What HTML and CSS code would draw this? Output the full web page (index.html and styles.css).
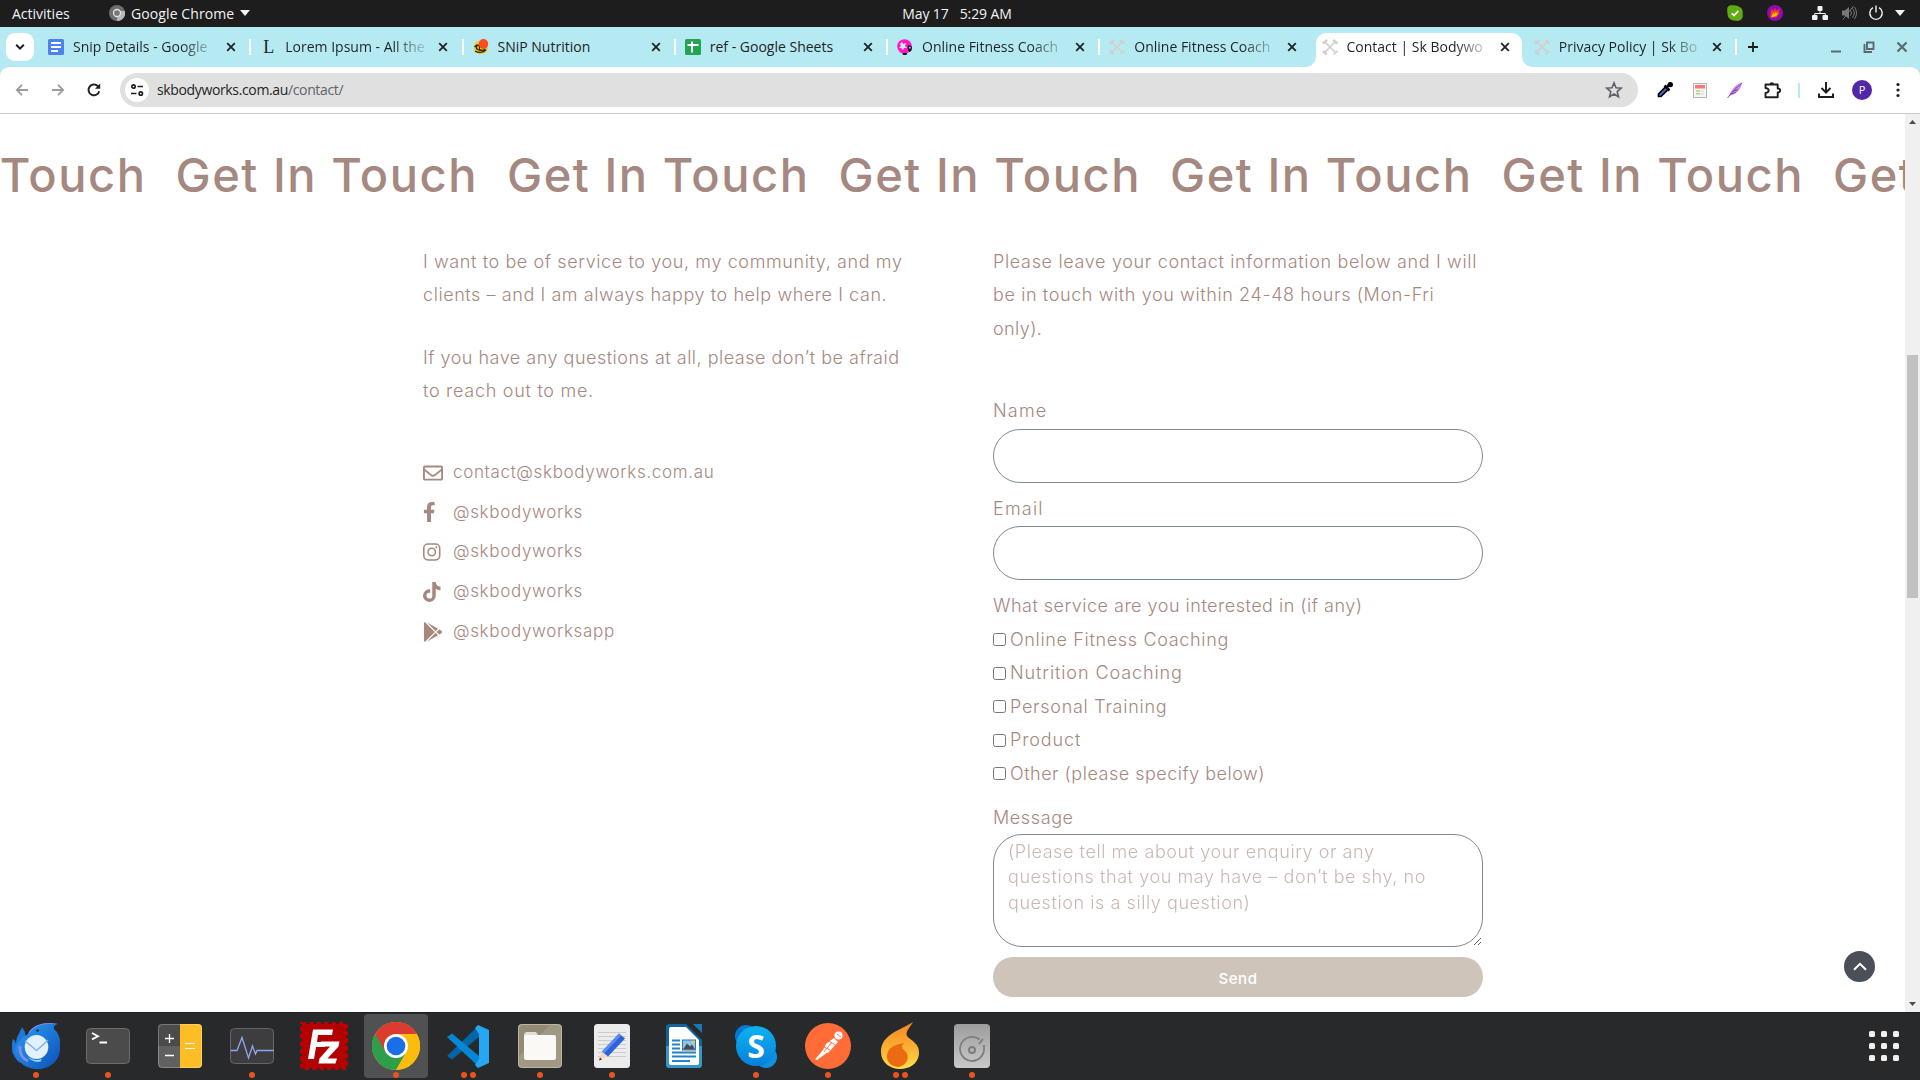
FILE: index.html
```html
<!DOCTYPE html>
<html lang="en">
<head>
<meta charset="utf-8">
<title>Contact | Sk Bodyworks</title>
<link rel="stylesheet" href="styles.css">
</head>
<body>
<svg class="defs" aria-hidden="true">
  <symbol id="close" viewBox="0 0 16 16"><path d="M4.200 4.200l7.600 7.600M11.800 4.200l-7.600 7.600" stroke="currentColor" stroke-width="1.800" fill="none"/></symbol>
  <symbol id="bones" viewBox="0 0 16 16"><g stroke="currentColor" fill="none" stroke-width="1.700"><path d="M3 3l10.500 10.500M13 3L2.500 13.500"/></g><g fill="currentColor"><circle cx="2" cy="3.600" r="1.700"/><circle cx="4" cy="1.800" r="1.600"/><circle cx="12.200" cy="1.800" r="1.600"/><circle cx="14.200" cy="3.600" r="1.600"/><circle cx="2" cy="13" r="1.500"/><circle cx="3.600" cy="14.500" r="1.500"/><circle cx="12.600" cy="14.600" r="1.200"/><circle cx="14.500" cy="12.700" r="1.200"/></g></symbol>
</svg>

<header class="topbar">
  <span class="menus">
    <span class="activities">Activities</span>
    <span class="appmenu">
      <svg width="16" height="16" viewBox="0 0 16 16"><circle cx="8" cy="8" r="8" fill="#6f6f6f"/><path d="M8 16a8 8 0 0 0 8-10H9z" fill="#b9b9b9"/><circle cx="8" cy="8" r="3.500" fill="#777" stroke="#e4e4e4" stroke-width="1.300"/></svg>
      <span class="appname">Google Chrome</span>
      <svg width="10" height="6" viewBox="0 0 10 6"><path d="M0 0h10L5 6z" fill="#f2f2f2"/></svg>
    </span>
  </span>
  <span class="clock"><span>May 17</span><span>5:29 AM</span></span>
  <span class="tray">
    <svg width="16" height="16" viewBox="0 0 16 16"><path d="M4 .3C8 .1 15 1 15.600 6c.3 2-.2 3 .2 5-.3 4-4 5.500-6.500 4.700C4 16 .8 13 .6 9.500.7 8 0 7 .2 4 .3 2 2 .4 4 .3z" fill="#5fab12"/><path d="M4.800 8.300l2.300 2.200 4.200-4.600" stroke="#fff" stroke-width="1.700" fill="none"/></svg>
    <svg class="t2" width="16" height="16" viewBox="0 0 16 16"><circle cx="8" cy="8" r="8" fill="#8f0bb0"/><path d="M3.500 12.500C3 9 4 6 5 3.500l1.200 3L8 2.800l.8 3.400 4-2.700-1.300 4 1.300.3-3.300 4.400z" fill="#ff3d1f"/><path d="M4 12.500l2.500-5 .8 1.800L9 6.500l.6 2 1.600-.8-2 3.300z" fill="#ffc400"/></svg>
    <svg class="t3" width="16" height="16" viewBox="0 0 16 16"><g fill="#f2f2f2"><rect x="5.500" y="1" width="5" height="5" rx="1"/><rect x="0" y="10" width="5.500" height="5" rx="1"/><rect x="10.500" y="10" width="5.500" height="5" rx="1"/></g><path d="M8 6v2.500M2.700 10.500v-2h10.600v2" stroke="#f2f2f2" fill="none"/></svg>
    <svg class="t4" width="16" height="16" viewBox="0 0 16 16"><path d="M1 5.500h3L8 2v12l-4-3.500H1z" fill="#777"/><path d="M9.500 5.500q2 2.500 0 5M11.500 3.500q3.500 4.500 0 9M13.500 2q4 6 0 12M2 14.500L12.500 1" stroke="#777" fill="none"/></svg>
    <svg class="t5" width="16" height="16" viewBox="0 0 16 16"><path d="M5 2.700a6.200 6.200 0 1 0 6 0M8 .5v7" stroke="#f2f2f2" stroke-width="1.400" fill="none"/></svg>
    <svg class="t6" width="10" height="6" viewBox="0 0 10 6"><path d="M0 0h10L5 6z" fill="#f2f2f2"/></svg>
  </span>
</header>

<nav class="tabstrip">
  <span class="tabsearch"><svg width="10" height="8" viewBox="0 0 10 8"><path d="M1.200 1.800L5 5.600l3.800-3.800" stroke="#1c1c1c" stroke-width="2" fill="none"/></svg></span>
  <div class="tab"><svg class="fav" viewBox="0 0 16 16"><rect width="16" height="16" rx="1.500" fill="#4c82ee"/><path d="M3 4h10M3 8h10M3 12h7" stroke="#fff" stroke-width="1.800"/></svg><span class="ttl fade">Snip Details - Google</span><svg class="x"><use href="#close"/></svg></div>
  <div class="tab"><span class="fav letter">L</span><span class="ttl fade">Lorem Ipsum - All the</span><svg class="x"><use href="#close"/></svg></div>
  <div class="tab"><svg class="fav" viewBox="0 0 16 16"><path d="M1 8C1 4 5 1 9 2l6 7c-1 5-5 6-8 6s-6-2-6-7z" fill="#f3ca16"/><path d="M1.500 8c2-3 6-2 5 1s3 3 6 1M2 12c3 2 8 2 11-1M4 6C2 10 5 12 9 11" stroke="#302800" stroke-width="1.300" fill="none"/><ellipse cx="10.500" cy="5" rx="4.700" ry="5" fill="#ff4b20"/></svg><span class="ttl">SNiP Nutrition</span><svg class="x"><use href="#close"/></svg></div>
  <div class="tab"><svg class="fav" viewBox="0 0 16 16"><rect width="16" height="16" rx="1.500" fill="#23a455"/><path d="M2.500 6h11M7 2.500v11" stroke="#fff" stroke-width="1.900"/></svg><span class="ttl">ref - Google Sheets</span><svg class="x"><use href="#close"/></svg></div>
  <div class="tab"><svg class="fav" viewBox="0 0 16 16"><circle cx="7.500" cy="7.500" r="7.300" fill="#ff18c4"/><path d="M3 5l2-2 1 2 3-1-1 3 2 2-3 0-1 2-2-2H2l2-2z" fill="#c9eef5"/><path d="M11 6.500q4-.5 4 2.500 0 3-2.500 4Q10 10 11 6.500zM5.500 14h4.500l-.5 2H6z" fill="#141414"/><circle cx="12.800" cy="8.800" r="1" fill="#9ce"/></svg><span class="ttl fade">Online Fitness Coach</span><svg class="x"><use href="#close"/></svg></div>
  <div class="tab"><svg class="fav bones"><use href="#bones"/></svg><span class="ttl fade">Online Fitness Coach</span><svg class="x"><use href="#close"/></svg></div>
  <div class="tab active"><svg class="fav bones"><use href="#bones"/></svg><span class="ttl fade">Contact | Sk Bodywo</span><svg class="x"><use href="#close"/></svg></div>
  <div class="tab"><svg class="fav bones"><use href="#bones"/></svg><span class="ttl fade">Privacy Policy | Sk Bo</span><svg class="x"><use href="#close"/></svg></div>
  <svg class="plus" width="12" height="12" viewBox="0 0 12 12"><path d="M6 1v10M1 6h10" stroke="#1c1c1c" stroke-width="1.800"/></svg>
  <span class="winctl">
    <svg width="12" height="12" viewBox="0 0 12 12"><path d="M1 10.500h10" stroke="#5b6a6d" stroke-width="2"/></svg>
    <svg width="12" height="12" viewBox="0 0 12 12"><path d="M4 1.500h6.500V8H4zM1.500 3v8H9" stroke="#5b6a6d" stroke-width="1.900" fill="none"/></svg>
    <svg width="12" height="12" viewBox="0 0 12 12"><path d="M1.500 1.500l9 9M10.500 1.500l-9 9" stroke="#5b6a6d" stroke-width="2.200"/></svg>
  </span>
</nav>

<div class="toolbar">
  <svg class="nav off" viewBox="0 0 16 16"><path d="M14 8H3M8 2.800L2.800 8 8 13.200" stroke="currentColor" stroke-width="1.800" fill="none"/></svg>
  <svg class="nav off" viewBox="0 0 16 16"><path d="M2 8h11M8 2.800L13.200 8 8 13.200" stroke="currentColor" stroke-width="1.800" fill="none"/></svg>
  <svg class="nav" viewBox="0 0 16 16"><path d="M13.200 9.200A5.400 5.400 0 1 1 11.700 4l1.600 1.500" stroke="currentColor" stroke-width="1.900" fill="none"/><path d="M14.200 1.500v5.300H9z" fill="currentColor"/></svg>
  <div class="omnibox">
    <span class="siteinfo"><svg width="14" height="14" viewBox="0 0 14 14"><g stroke="#1f1f1f" stroke-width="1.700" fill="none"><circle cx="3.500" cy="3.500" r="1.700"/><path d="M7.500 3.500H13M1 10.500h5.500"/><circle cx="10.800" cy="10.500" r="1.700"/></g></svg></span>
    <span class="url">skbodyworks.com.au<i>/contact/</i></span>
    <svg class="star" viewBox="0 0 18 18"><path d="M9 1.900l2 4.900 5.200.4-4 3.400 1.300 5.200L9 13l-4.500 2.800 1.300-5.200-4-3.400L7 6.800z" stroke="#5f6368" stroke-width="1.600" fill="none"/></svg>
  </div>
  <div class="exts">
    <svg width="18" height="18" viewBox="0 0 18 18"><path d="M2.500 15.500v-2.500l7-7 2.500 2.500-7 7z" fill="#4b67cf" stroke="#000" stroke-width="1.700"/><path d="M8.500 4.500l5 5M10.500 6.500l3.500-3.500" stroke="#000" stroke-width="2.500"/><circle cx="14.300" cy="3.600" r="2.700"/></svg>
    <svg width="18" height="18" viewBox="0 0 18 18"><rect x="2.500" y="2.500" width="13" height="14" fill="#f5f5f5" stroke="#b5b5b5"/><path d="M4 4h10v3.500H4z" fill="#ff7474"/><path d="M5 10h4M5 12.800h4" stroke="#a4d873" stroke-width="1.500"/><path d="M10 10.200h3M10 13h3" stroke="#e4e4e4" stroke-width="1.800"/></svg>
    <svg width="18" height="18" viewBox="0 0 18 18"><path d="M3 15.500C4 10 9.500 3.500 16 1.500 15.500 7 11 13 4.500 14.500z" fill="#c98ae6"/><path d="M1.500 17C6 11 10 7 16 2M5 13l5-1.500M7 10l5-1" stroke="#6b3292" stroke-width=".8" fill="none"/></svg>
    <svg class="puzzle" width="18" height="18" viewBox="0 0 18 18"><path d="M2.500 3.500h12.200v4q2.500 0 2.500 2t-2.500 2v4.700H2.500v-4.200q3.200-.5 3.200-2.500t-3.200-2.500z" stroke="#1f1f1f" stroke-width="1.900" fill="none" stroke-linejoin="round"/><path d="M6.500 3.500a2.300 2.300 0 0 1 4.600 0z" fill="#1f1f1f"/></svg>
    <b class="bar"></b>
    <svg width="18" height="18" viewBox="0 0 18 18"><path d="M9 1v10M4.500 7L9 11.500 13.500 7M2 12.500V16h14v-3.500" stroke="#1f1f1f" stroke-width="2" fill="none"/></svg>
    <span class="avatar">P</span>
    <svg class="kebab" width="6" height="16" viewBox="0 0 6 16"><g fill="#1f1f1f"><circle cx="3" cy="2.500" r="1.600"/><circle cx="3" cy="8" r="1.600"/><circle cx="3" cy="13.500" r="1.600"/></g></svg>
  </div>
</div>

<main class="viewport">
  <div class="page">
    <div class="marquee"><span>Get In Touch</span><span>Get In Touch</span><span>Get In Touch</span><span>Get In Touch</span><span>Get In Touch</span><span>Get In Touch</span><span>Get In Touch</span></div>
    <div class="columns">
      <section class="left">
        <p><span class="k60">I want to be of service to you, my community, and my</span><br><span class="k55">clients – and I am always happy to help where I can.</span></p>
        <p><span class="k50">If you have any questions at all, please don’t be afraid</span><br><span class="k70">to reach out to me.</span></p>
        <ul class="links">
          <li><span class="ic"><svg width="20" height="20" viewBox="0 0 512 512"><path d="M464 64H48C21.490 64 0 85.490 0 112v288c0 26.510 21.490 48 48 48h416c26.510 0 48-21.490 48-48V112c0-26.510-21.490-48-48-48zm0 48v40.805c-22.422 18.259-58.168 46.651-134.587 106.490-16.841 13.247-50.201 45.072-73.413 44.701-23.208.375-56.579-31.459-73.413-44.701C106.180 199.465 70.425 171.067 48 152.805V112h416zM48 400V214.398c22.914 18.251 55.409 43.862 104.938 82.646 21.857 17.205 60.134 55.186 103.062 54.955 42.717.231 80.509-37.199 103.053-54.947 49.528-38.783 82.032-64.401 104.947-82.653V400H48z"/></svg></span>contact@skbodyworks.com.au</li>
          <li><span class="ic"><svg width="12.500" height="20" viewBox="0 0 320 512"><path d="M279.140 288l14.220-92.660h-88.910v-60.130c0-25.350 12.420-50.060 52.240-50.060h40.420V6.260S260.430 0 225.360 0c-73.220 0-121.080 44.380-121.080 124.720v70.620H22.890V288h81.390v224h100.170V288z"/></svg></span>@skbodyworks</li>
          <li><span class="ic"><svg width="17.500" height="20" viewBox="0 0 448 512"><rect x="20" y="52" width="408" height="408" rx="105" fill="none" stroke="#a5887f" stroke-width="40"/><circle cx="224" cy="256" r="95" fill="none" stroke="#a5887f" stroke-width="40"/><circle cx="343" cy="137" r="27"/></svg></span>@skbodyworks</li>
          <li><span class="ic"><svg width="17.500" height="20" viewBox="0 0 448 512"><path d="M448,209.910a210.060,210.060,0,0,1-122.770-39.250V349.380A162.550,162.550,0,1,1,185,188.310V278.200a74.620,74.620,0,1,0,52.230,71.180V0l88,0a121.180,121.180,0,0,0,1.860,22.170h0A122.180,122.180,0,0,0,381,102.390a121.430,121.430,0,0,0,67,20.140Z"/></svg></span>@skbodyworks</li>
          <li><span class="ic"><svg width="20" height="20" viewBox="0 0 512 512"><path d="M325.300 234.300L104.600 13l280.800 161.200-60.100 60.100zM47 0C34 6.800 25.300 19.200 25.300 35.300v441.300c0 16.100 8.700 28.500 21.700 35.300l256.600-256L47 0zm425.200 225.600l-58.900-34.100-65.700 64.500 65.700 64.500 60.100-34.100c18-14.300 18-46.500-1.200-60.800zM104.600 499l280.800-161.200-60.100-60.100L104.600 499z"/></svg></span>@skbodyworksapp</li>
        </ul>
      </section>
      <form class="right">
        <p><span class="k65">Please leave your contact information below and I will</span><br><span class="k60">be in touch with you within 24-48 hours (Mon-Fri</span><br>only).</p>
        <label class="lbl first k110">Name</label><input class="field" type="text">
        <label class="lbl k110">Email</label><input class="field" type="text">
        <label class="lbl k50">What service are you interested in (if any)</label>
        <div class="checks">
          <label class="k65"><input type="checkbox">Online Fitness Coaching</label>
          <label class="k90"><input type="checkbox">Nutrition Coaching</label>
          <label class="k70"><input type="checkbox">Personal Training</label>
          <label class="k90"><input type="checkbox">Product</label>
          <label class="k50"><input type="checkbox">Other (please specify below)</label>
        </div>
        <label class="lbl msg k60">Message</label>
        <textarea placeholder="(Please tell me about your enquiry or any questions that you may have – don’t be shy, no question is a silly question)"></textarea>
        <button class="send" type="button">Send</button>
      </form>
    </div>
    <span class="totop"><svg width="14" height="9" viewBox="0 0 14 9"><path d="M1 7.800l6-6 6 6" stroke="#fff" stroke-width="2" fill="none"/></svg></span>
  </div>
  <div class="scrollbar">
    <svg width="7" height="4" viewBox="0 0 7 4"><path d="M0 4h7L3.500 0z" fill="#4d4d4d"/></svg>
    <b></b>
    <svg width="7" height="4" viewBox="0 0 7 4"><path d="M0 0h7L3.500 4z" fill="#4d4d4d"/></svg>
  </div>
</main>

<footer class="dock">
  <div class="app d1"><svg viewBox="0 0 48 48">
    <defs><linearGradient id="tb" x1="0" y1="0" x2="1" y2="1"><stop offset="0" stop-color="#2ea0f5"/><stop offset="1" stop-color="#0b4fb8"/></linearGradient></defs>
    <path d="M1 17q3 2 3 5c0-8 4-11 6-17q5 6 3 12c-3 6-3 11 0 16L8 41C0 34-2 26 1 17z" fill="#1b78dc"/><path d="M16 12C20 3 33-1 46 2q-5 1-4 5c8 7 7 18 5 26-4 11-15 15-24 14C12 46 3 38 3 27q3-9 13-15z" fill="url(#tb)"/><path d="M16 12C20 3 33-1 46 2c-14-1-22 1-27 7z" fill="#9f86ee"/><path d="M8 24q-1 11 8 15" stroke="#7d8df0" stroke-width="3" fill="none"/><ellipse cx="24.500" cy="25" rx="11.800" ry="12" fill="#e2f1ff"/><path d="M13 19q4 3 11.500 9.500Q31 23 36 18" stroke="#7fb2e8" stroke-width="1.500" fill="none"/><path d="M15 34q6 6 15 3-3 3 1 2-10 3-16-5z" fill="#a8d4fa"/><circle cx="25.500" cy="8.500" r="1.300" fill="#06305e"/></svg></div>
  <div class="app d1"><svg viewBox="0 0 48 48"><rect x="2.500" y="6.500" width="43" height="35" rx="4" fill="#4b4b4b" stroke="#6c6c6c"/><path d="M8 11l6 3.200-6 3.200M15.500 20.500h7.500" stroke="#fff" stroke-width="1.800" fill="none"/></svg></div>
  <div class="app"><svg viewBox="0 0 48 48"><rect x="2" y="2" width="44" height="44" rx="4" fill="#606060"/><path d="M6 2h18v22H2V6q0-4 4-4z" fill="#4b4b4b"/><path d="M24 2h18q4 0 4 4v36q0 4-4 4H24z" fill="#fdbd27"/><path d="M9 16.500h9M13.500 12v9M9 33.500h9" stroke="#fff" stroke-width="1.300"/><path d="M29 21.500h10M29 26.500h10" stroke="#fff" stroke-width="1.200"/><rect x="2.500" y="2.500" width="43" height="43" rx="4" fill="none" stroke="#ffffff" stroke-opacity=".25"/></svg></div>
  <div class="app d1"><svg viewBox="0 0 48 48"><rect x="2.500" y="6.500" width="43" height="35" rx="4" fill="#3d3d3f" stroke="#656567"/><path d="M2.500 28.500H9l5-13 6.500 20.500 4-12 3 8 1.500-3.500H46" stroke="#8fa8ec" stroke-width="1.300" fill="none"/></svg></div>
  <div class="app"><svg viewBox="0 0 48 48"><rect x="2" y="2" width="44" height="44" fill="#b30000"/><rect x="1.800" y="1.800" width="44.400" height="44.400" fill="none" stroke="#bf0000" stroke-width="3.600" stroke-dasharray="4.500 2.900"/><path d="M13 7.500h20l-1 5.500H18l-1 7h9l-1 5h-9l-2 12H8z" fill="#fff"/><path d="M21 19.500h18.500l-1 5-11 12h9.500l-1.500 5H18.500l1-5 10.500-12H20z" fill="#fff"/></svg></div>
  <div class="app d1 current"><svg viewBox="0 0 48 48"><circle cx="24" cy="24" r="24" fill="#fbbc0c"/><path d="M24 24L3.200 12A24 24 0 0 0 24 48l10.400-18z" fill="#2f9e4c"/><path d="M24 12H44.800A24 24 0 0 0 3.200 12l10.400 18z" fill="#dc3c2f"/><path d="M44.800 12H24l10.400 18L24 48a24 24 0 0 0 20.800-36z" fill="#fbbc0c"/><circle cx="24" cy="24" r="12" fill="#fff"/><circle cx="24" cy="24" r="9.300" fill="#1a6fe8"/></svg></div>
  <div class="app d2"><svg viewBox="0 0 48 48"><path d="M3 34l5 3.500L35 15V3z" fill="#0065a9"/><path d="M3 15l5-3.500L35 34v11z" fill="#0488d6"/><path d="M34 3l11 5v33l-11 5-3-3 4-6V12l-4-6z" fill="#27a7f2"/></svg></div>
  <div class="app d1"><svg viewBox="0 0 48 48"><rect x="2" y="2" width="44" height="44" rx="4" fill="#a09882"/><path d="M6 2h29L2 35V6q0-4 4-4z" fill="#938b75"/><path d="M8 14q0-4 3-4h9l2 3h4v10H8z" fill="#e2dfd5"/><rect x="8" y="13" width="32" height="25" rx="2" fill="#faf9f6"/><rect x="2.500" y="2.500" width="43" height="43" rx="4" fill="none" stroke="#bcb5a2"/></svg></div>
  <div class="app d1"><svg viewBox="0 0 48 48"><rect x="6" y="2" width="36" height="44" rx="3.500" fill="#ececec"/><path d="M10 10.500h28M10 14.500h28M10 18.500h28M10 22.500h28M10 26.500h28M10 30.500h28M10 34.500h28" stroke="#ccc"/><path d="M11 38.500l3-9 5 5z" fill="#f6d9bd"/><path d="M11 38.500l1-3 2 2z" fill="#333"/><path d="M14 29.500l17-18 6 5-17 18z" fill="#2e62d9"/><path d="M14 29.500l17-18 2 2-17 18z" fill="#5b8cf5"/></svg></div>
  <div class="app"><svg viewBox="0 0 48 48"><path d="M9 2h17l16 16v24q0 4-3 4H9q-3 0-3-4V5q0-3 3-3z" fill="#11639c"/><path d="M6 24h36v18q0 4-3 4H9q-3 0-3-4z" fill="#3796cb"/><path d="M33 2h9v9z" fill="#1979b8"/><path d="M11 5h15l13 13v23q0 2-2 2H11q-2 0-2-2V7q0-2 2-2z" fill="#fff"/><path d="M12 18.500h8M12 22.500h8M12 26.500h8M12 30.500h24M12 34.500h24M12 39h18" stroke="#2383c4" stroke-width="1.900"/><rect x="22.500" y="18" width="13" height="10" fill="#88c5ef" stroke="#2879b4"/><path d="M23 27.500l4-6 3 3 2-2 3 5z" fill="#504940"/><circle cx="33.500" cy="20" r="1.500" fill="#f5c83d"/></svg></div>
  <div class="app d1"><svg viewBox="0 0 48 48"><defs><linearGradient id="sk" x1="0" y1="0" x2="0" y2="1"><stop offset="0" stop-color="#0bb3f0"/><stop offset="1" stop-color="#0880dc"/></linearGradient></defs><circle cx="14" cy="14" r="11" fill="#0078d4"/><circle cx="34" cy="35" r="11" fill="#1190dc"/><circle cx="24" cy="24" r="20" fill="url(#sk)"/></svg><b class="skype">S</b></div>
  <div class="app d1"><svg viewBox="0 0 48 48"><circle cx="24" cy="24" r="23" fill="#ff6c37"/><circle cx="34.500" cy="13.500" r="4" fill="#fff"/><path d="M30 16l4 4-10 11-6-1 4-8z" fill="#fff"/><path d="M19 28l-8 9.500 2 .5 11-8z" fill="#fff"/><path d="M20 25l6 3M25 19l6 4M33 12l4 3M20 30l8-10" stroke="#ff6c37" stroke-width=".9"/></svg></div>
  <div class="app d2"><svg viewBox="0 0 48 48"><defs><linearGradient id="fl" x1="0" y1="0" x2="0" y2="1"><stop offset="0" stop-color="#f5841f"/><stop offset=".55" stop-color="#fbb034"/><stop offset="1" stop-color="#ffe04a"/></linearGradient></defs><path d="M37 0c-3 6-8 9-6 14 3 4 13 7 12 18-1 10-10 15-19 15S5 41 5 30C5 12 25 8 37 0z" fill="url(#fl)"/><path d="M28 21c-4 4-1 6 2 9 4 5 1 13-7 15-7 0-12-4-12-11 0-9 10-12 17-13z" fill="#ee6a10"/></svg></div>
  <div class="app d1"><svg viewBox="0 0 48 48"><defs><linearGradient id="dk" x1="0" y1="0" x2="0" y2="1"><stop offset="0" stop-color="#9d9d9d"/><stop offset="1" stop-color="#c9c9c9"/></linearGradient></defs><rect x="6" y="2" width="36" height="44" rx="4" fill="url(#dk)"/><path d="M31.500 17.500A12 12 0 1 0 36 26v-3M31 22l4-5" stroke="#7c7c7c" stroke-width="1.700" fill="none"/><circle cx="24" cy="28" r="3" fill="none" stroke="#7c7c7c" stroke-width="2"/></svg></div>
  <div class="grid"><i></i><i></i><i></i><i></i><i></i><i></i><i></i><i></i><i></i></div>
</footer>
</body>
</html>
```

FILE: styles.css
```css
* { box-sizing: border-box; }
body {
  margin: 0;
  width: 1920px;
  height: 1080px;
  overflow: hidden;
  display: flex;
  flex-direction: column;
  background: #b6eaf2;
  font-family: "Open Sans", "Noto Sans", sans-serif;
  font-size: 14px;
}
svg { display: block; flex: none; }
.defs { display: none; }

/* system bar */
.topbar {
  height: 27px;
  flex: none;
  display: grid;
  grid-template-columns: 1fr 160px 1fr;
  align-items: center;
  padding: 0 15px 1px 12px;
  background: #1d1d1d;
  color: #f2f2f2;
  white-space: nowrap;
}
.menus { display: flex; }
.activities { width: 97px; }
.appmenu { display: flex; align-items: center; gap: 6px; letter-spacing: .1px; }
.clock { display: flex; gap: 11px; justify-content: center; letter-spacing: -.1px; padding-right: 3px; }
.tray { display: flex; align-items: center; justify-content: flex-end; }
.t2 { margin-left: 24px; }
.t3 { margin-left: 29px; }
.t4 { margin-left: 13px; }
.t5 { margin-left: 11px; }
.t6 { margin-left: 11px; }

/* tabs */
.tabstrip {
  height: 40px;
  flex: none;
  display: flex;
  align-items: center;
  padding-left: 6px;
  color: #1f2325;
}
.tabsearch {
  width: 28px;
  height: 28px;
  margin-right: 4px;
  border-radius: 9px;
  background: #fff;
  display: grid;
  place-items: center;
}
.tab {
  position: relative;
  width: 212.250px;
  height: 34px;
  margin-top: 6px;
  padding: 0 11px 7px 10px;
  display: flex;
  align-items: center;
  flex: none;
}
.tab::after {
  content: "";
  position: absolute;
  right: -1px;
  top: 6px;
  width: 2px;
  height: 16px;
  background: #fff;
}
.fav { width: 16px; height: 16px; margin-right: 9px; }
.bones { color: #d3cfca; }
.letter { font: 18px/16px "Liberation Serif", serif; padding-left: 3px; color: #222; }
.ttl { width: 142px; white-space: nowrap; }
.fade { -webkit-mask-image: linear-gradient(90deg, #000 108px, transparent 146px); mask-image: linear-gradient(90deg, #000 108px, transparent 146px); }
.x { width: 16px; height: 16px; margin-left: 8px; }
.active::before {
  content: "";
  position: absolute;
  left: 4px;
  right: 2px;
  top: 0;
  bottom: 0;
  background: #fff;
  border-radius: 10px 10px 0 0;
}
.active > * { position: relative; }
/* curved feet where the open tab meets the toolbar */
.tab.active::after {
  left: -6px;
  right: -8px;
  top: auto;
  bottom: 0;
  width: auto;
  height: 10px;
  background:
    radial-gradient(circle at 0 0, transparent 9.500px, #fff 10px) left / 10px 10px no-repeat,
    radial-gradient(circle at 100% 0, transparent 9.500px, #fff 10px) right / 10px 10px no-repeat;
}
.tab:nth-child(7)::after { display: none; }
.plus { margin-left: 11px; }
.winctl { margin-left: auto; margin-right: 12px; display: flex; gap: 21px; }

/* toolbar */
.toolbar {
  height: 47px;
  flex: none;
  display: flex;
  align-items: center;
  padding: 0 0 0 14px;
  border-bottom: 1px solid #c9cccd;
  border-radius: 9px 9px 0 0;
  background: #fff;
}
.nav { width: 16px; height: 16px; margin-right: 20px; color: #1f1f1f; }
.off { color: #9b9b9b; }
.omnibox {
  width: 1518px;
  height: 34px;
  margin-left: -2px;
  padding: 0 15px 0 5px;
  border-radius: 17px;
  background: #e0e0e0;
  display: flex;
  align-items: center;
}
.siteinfo { width: 24px; height: 24px; border-radius: 50%; background: #fff; display: grid; place-items: center; }
.url { margin-left: 8px; padding-bottom: 1px; letter-spacing: -.36px; color: #1f1f1f; }
.url i { font-style: normal; color: #5f6368; }
.star { width: 18px; height: 18px; margin-left: auto; }
.exts { display: flex; align-items: center; gap: 17px; padding-left: 18px; }
.puzzle { margin-left: 2px; }
.kebab { margin-left: 6px; }
.bar { width: 2px; height: 15px; background: #b6eaf2; }
.avatar { width: 20px; height: 20px; border-radius: 50%; background: #5326a8; color: #fff; font-size: 11px; line-height: 20px; text-align: center; }

/* page */
.viewport { height: 898px; flex: none; display: flex; background: #fff; }
.page { position: relative; width: 1905px; overflow: hidden; color: #a5887f; font-family: Inter, "Open Sans", sans-serif; font-weight: 300; font-size: 18px; }
.marquee { display: flex; margin: 23px 0 0 -156px; font-size: 47px; font-weight: 450; line-height: 76px; letter-spacing: 1.550px; white-space: nowrap; }
.marquee span { width: 331.500px; flex: none; }
.columns { display: grid; grid-template-columns: 490px 490px; gap: 80px; padding: 32px 0 0 423px; line-height: 33.400px; letter-spacing: .4px; }
p { margin: 0 0 29px; white-space: nowrap; }
.k50 { letter-spacing: .5px; }
.k55 { letter-spacing: .57px; }
.k60 { letter-spacing: .61px; }
.k65 { letter-spacing: .66px; }
.k70 { letter-spacing: .72px; }
.k90 { letter-spacing: .9px; }
.k110 { letter-spacing: 1.200px; }
.links { list-style: none; margin: 45px 0 0; padding: 0; font-size: 17px; letter-spacing: .67px; }
.links li { display: flex; align-items: center; height: 39.750px; }
.ic { width: 30px; }
.ic svg { fill: #a5887f; }
.right { display: flex; flex-direction: column; }
.right p { margin-bottom: 49px; }
.lbl { height: 34px; margin-top: 9px; }
.lbl.first { height: 34.800px; margin-top: 0; }
.lbl.msg { margin-top: 9.800px; padding-top: .5px; }
.field { width: 490px; height: 54px; border: 1px solid #818a91; border-radius: 27px; background: #fff; }
.checks { display: flex; flex-direction: column; }
.checks label { display: flex; align-items: center; height: 33.450px; }
.checks input { width: 13px; height: 13px; margin: 0 4px 0 0; }
textarea {
  display: block;
  height: 113px;
  padding: 4px 44px 4px 14px;
  border: 1px solid #818a91;
  border-radius: 29px;
  font: 300 18px/25.400px Inter, "Open Sans", sans-serif;
  letter-spacing: .57px;
  color: #a5887f;
  overflow: hidden;
}
textarea::placeholder { color: #a5887f; opacity: .6; }
.send { height: 40px; margin-top: 10px; padding: 2px 6px 0; border: 0; border-radius: 20px; background: #cfc4ba; color: #fff; font: 450 15px Inter, sans-serif; letter-spacing: .6px; }
.totop { position: absolute; left: 1844px; top: 837px; width: 31px; height: 31px; border-radius: 50%; background: #4b4f58; display: grid; place-items: center; }

.scrollbar { width: 15px; background: #f0f0f0; display: flex; flex-direction: column; align-items: center; padding: 6px 0; }
.scrollbar b { width: 11px; height: 243px; margin: 231px 0 auto; background: #c1c1c1; }

/* dock */
.dock { height: 68px; flex: none; display: flex; background: #28292b; border-top: 1px solid #1c1d1f; }
.app { position: relative; width: 72px; display: flex; justify-content: center; padding-top: 9px; }
.app > svg { position: relative; width: 48px; height: 48px; }
.current::before { content: ""; position: absolute; left: 4px; top: 1px; width: 64px; height: 64px; border-radius: 4px; background: #505153; }
.d1::after, .d2::after { content: ""; position: absolute; left: 33px; top: 59px; width: 6px; height: 6px; border-radius: 50%; background: #e95420; }
.d2::after { left: 28.500px; box-shadow: 9px 0 #e95420; }
.skype { position: absolute; left: 0; right: 0; top: 11px; text-align: center; color: #fff; font: 700 32px/44px "Open Sans", sans-serif; }
.grid { margin: 18px 21px 0 auto; display: grid; grid-template-columns: repeat(3, 6px); grid-auto-rows: 6px; gap: 6px; }
.grid i { border-radius: 1.500px; background: #f1f0ee; }
```
